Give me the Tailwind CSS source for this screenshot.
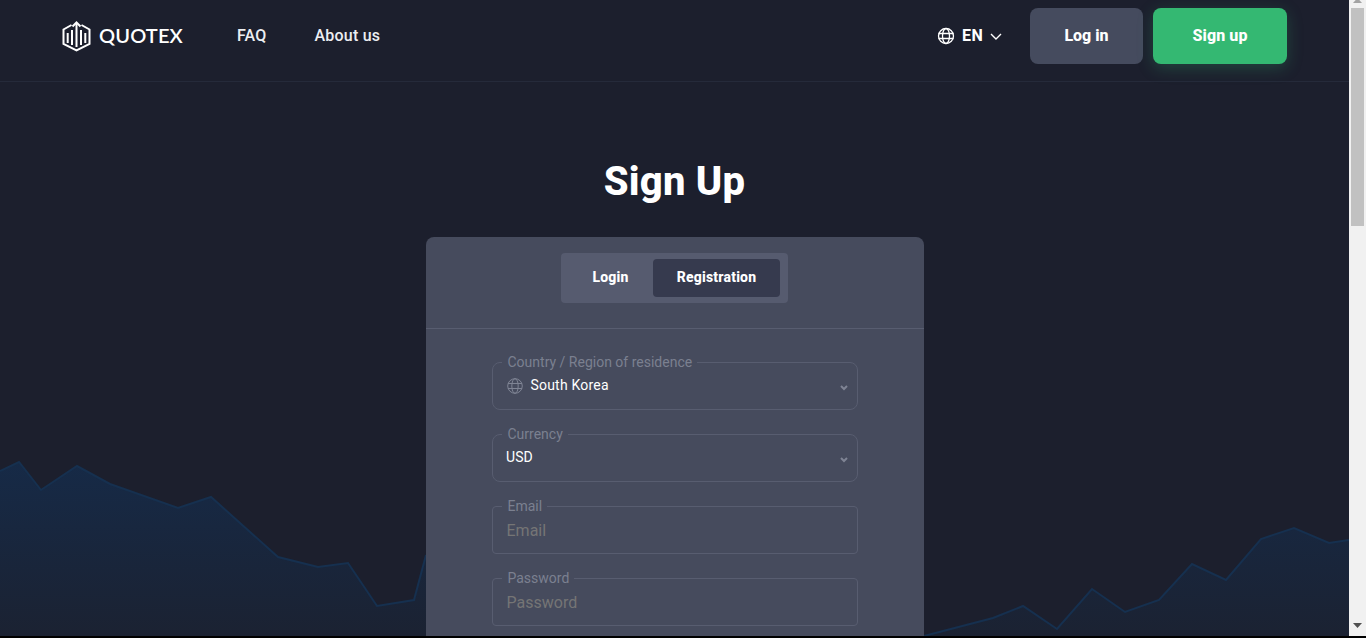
<!DOCTYPE html>
<html>
<head>
<meta charset="utf-8">
<title>Sign Up</title>
<script src="https://cdn.jsdelivr.net/npm/@tailwindcss/browser@4"></script>
</head>
<body class="bg-black overflow-hidden font-['Roboto',sans-serif]">
<div class="flex h-[636px] w-[1366px] overflow-hidden">
    <!-- Page -->
    <div class="relative w-[1349px] h-full bg-[#1c1f2d] overflow-hidden">
        <!-- Background chart -->
        <svg class="absolute left-0 top-0" width="1349" height="636" viewBox="0 0 1349 636" fill="none">
            <defs>
                <linearGradient id="chart-fill" x1="0" y1="460" x2="0" y2="636" gradientUnits="userSpaceOnUse">
                    <stop offset="0" stop-color="#162a47"/>
                    <stop offset="1" stop-color="#1b2232"/>
                </linearGradient>
            </defs>
            <path fill="url(#chart-fill)" d="M0 471L19 462L41 490L77 466L110 484L178 508L211 497L278 557L318 567L348 563L377 606L414 600L426 555V636H0Z"/>
            <path fill="url(#chart-fill)" d="M924 636L993 618L1023 606L1057 629L1092 589L1125 612L1159 600L1192 564L1226 580L1261 539L1294 528L1329 543L1349 540V636Z"/>
            <path stroke="#16304f" stroke-width="2" d="M0 471L19 462L41 490L77 466L110 484L178 508L211 497L278 557L318 567L348 563L377 606L414 600L426 555"/>
            <path stroke="#16304f" stroke-width="2" d="M924 636L993 618L1023 606L1057 629L1092 589L1125 612L1159 600L1192 564L1226 580L1261 539L1294 528L1329 543L1349 540"/>
        </svg>

        <!-- Header -->
        <header class="relative h-[82px] border-b border-[#252a3a] pl-[62px] pr-[62px] flex items-start">
            <div class="flex items-center h-[72px] w-[175px] gap-[8px]">
                <svg width="29" height="31" viewBox="0 0 29 31" fill="none" stroke="#fff" stroke-width="2">
                    <path d="M9.5 4L1.5 8.5V23L14.5 29.5L27.5 23V8.5L19.5 4"/>
                    <path d="M10.5 5.5L14.5 1.5L18.5 5.5"/>
                    <path d="M14.5 2V26"/>
                    <path d="M10 9V24"/>
                    <path d="M19 9V24"/>
                    <path d="M5.7 12V22"/>
                    <path d="M23.3 12V22"/>
                </svg>
                <span class="-mt-[2px] text-[20px] font-['Lato',sans-serif] font-semibold tracking-[0.15px] text-white">QUOTEX</span>
            </div>
            <nav class="flex items-center h-[72px] gap-[48px] text-[16px] font-medium tracking-[0.2px] text-[#eceef2]">
                <a>FAQ</a>
                <a>About us</a>
            </nav>
            <div class="ml-auto flex items-center h-[72px]">
                <button class="flex items-center text-white font-bold text-[16px] tracking-[0.3px] mr-[28px]">
                    <svg width="18" height="18" viewBox="0 0 18 18" fill="none" stroke="#fff" stroke-width="1.3">
                        <circle cx="9" cy="9" r="7.5"/>
                        <ellipse cx="9" cy="9" rx="3.5" ry="7.5"/>
                        <path d="M1.5 6.5H16.5M1.5 11.5H16.5"/>
                    </svg>
                    <span class="ml-[7px]">EN</span>
                    <svg class="ml-[7px]" width="12" height="7" viewBox="0 0 12 7" fill="none" stroke="#fff" stroke-width="1.4">
                        <path d="M1 1L6 6L11 1"/>
                    </svg>
                </button>
                <button class="w-[113px] h-[56px] rounded-lg bg-[#454b5e] text-white font-extrabold text-[16px]">Log in</button>
                <button class="ml-[10px] w-[134px] h-[56px] rounded-lg bg-[#34b872] text-white font-extrabold text-[16px] tracking-[0.1px] shadow-[0_4px_16px_rgba(52,184,114,0.25)]">Sign up</button>
            </div>
        </header>

        <!-- Main -->
        <main class="relative flex flex-col items-center">
            <h1 class="mt-[73px] text-[40px] leading-[54px] font-extrabold tracking-[0.2px] text-white">Sign Up</h1>
            <div class="mt-[28px] w-[498px] rounded-lg bg-[#464b5d]">
                <div class="h-[92px] border-b border-[#585d70] pt-[16px] flex justify-center">
                    <div class="h-[50px] w-[227px] rounded bg-[#565b6f] flex items-center pl-[8px] pr-[8px] text-[14px] font-extrabold tracking-[0.2px] text-white">
                        <button class="w-[83px] h-[38px] pb-[2px]">Login</button>
                        <button class="ml-[1px] w-[127px] h-[38px] pb-[2px] rounded bg-[#363a4e]">Registration</button>
                    </div>
                </div>
                <form class="pt-[25px] pb-[40px] px-[66px] flex flex-col gap-[16px]">
                    <fieldset class="h-[56px] border border-[#585d70] rounded-lg flex">
                        <legend class="ml-[9px] pl-[6px] pr-[5px] text-[14px] leading-[16px] text-[#7b8090]">Country / Region of residence</legend>
                        <div class="flex items-center w-full h-[37px] -mt-[3px] pl-[14px] pr-[9px]">
                            <svg width="16" height="16" viewBox="0 0 16 16" fill="none" stroke="#7f8494" stroke-width="1">
                                <circle cx="8" cy="8" r="7.3"/>
                                <ellipse cx="8" cy="8" rx="3.2" ry="7.3"/>
                                <path d="M1 5.5H15M1 10.5H15"/>
                            </svg>
                            <span class="ml-[8px] text-[14px] tracking-[0.2px] text-white">South Korea</span>
                            <svg class="ml-auto mt-[5px]" width="8" height="6" viewBox="0 0 8 6" fill="none" stroke="#7f8494" stroke-width="2">
                                <path d="M1 1L4 4L7 1"/>
                            </svg>
                        </div>
                    </fieldset>
                    <fieldset class="h-[56px] border border-[#585d70] rounded-lg flex">
                        <legend class="ml-[9px] pl-[6px] pr-[5px] text-[14px] leading-[16px] text-[#7b8090]">Currency</legend>
                        <div class="flex items-center w-full h-[37px] -mt-[3px] pl-[13.5px] pr-[9px]">
                            <span class="text-[14px] tracking-[0.1px] text-white">USD</span>
                            <svg class="ml-auto mt-[5px]" width="8" height="6" viewBox="0 0 8 6" fill="none" stroke="#7f8494" stroke-width="2">
                                <path d="M1 1L4 4L7 1"/>
                            </svg>
                        </div>
                    </fieldset>
                    <fieldset class="h-[56px] border border-[#585d70] rounded pl-[14px] pr-[13px]">
                        <legend class="-ml-[5px] pl-[6px] pr-[5px] text-[14px] leading-[16px] text-[#7b8090]">Email</legend>
                        <input type="text" placeholder="Email" class="block w-full h-[34px] -mt-[1px] bg-transparent text-[16px] text-white placeholder:text-[#757575] outline-none">
                    </fieldset>
                    <fieldset class="h-[56px] border border-[#585d70] rounded pl-[14px] pr-[13px]">
                        <legend class="-ml-[5px] pl-[6px] pr-[5px] text-[14px] leading-[16px] text-[#7b8090]">Password</legend>
                        <input type="password" placeholder="Password" class="block w-full h-[34px] -mt-[1px] bg-transparent text-[16px] text-white placeholder:text-[#757575] outline-none">
                    </fieldset>
                </form>
            </div>
        </main>
    </div>

    <!-- Scrollbar -->
    <div class="w-[17px] h-full bg-[#f1f1f1] flex flex-col items-center">
        <svg class="mt-0 shrink-0" width="17" height="8" viewBox="0 0 17 8"><path d="M8.5 -2L13 3H4Z" fill="#a3a3a3"/></svg>
        <div class="w-[13px] h-[218px] bg-[#c1c1c1]"></div>
        <svg class="mt-auto mb-[6px] shrink-0" width="17" height="8" viewBox="0 0 17 8"><path d="M4 1H13L8.5 6Z" fill="#505050"/></svg>
    </div>
</div>
</body>
</html>
